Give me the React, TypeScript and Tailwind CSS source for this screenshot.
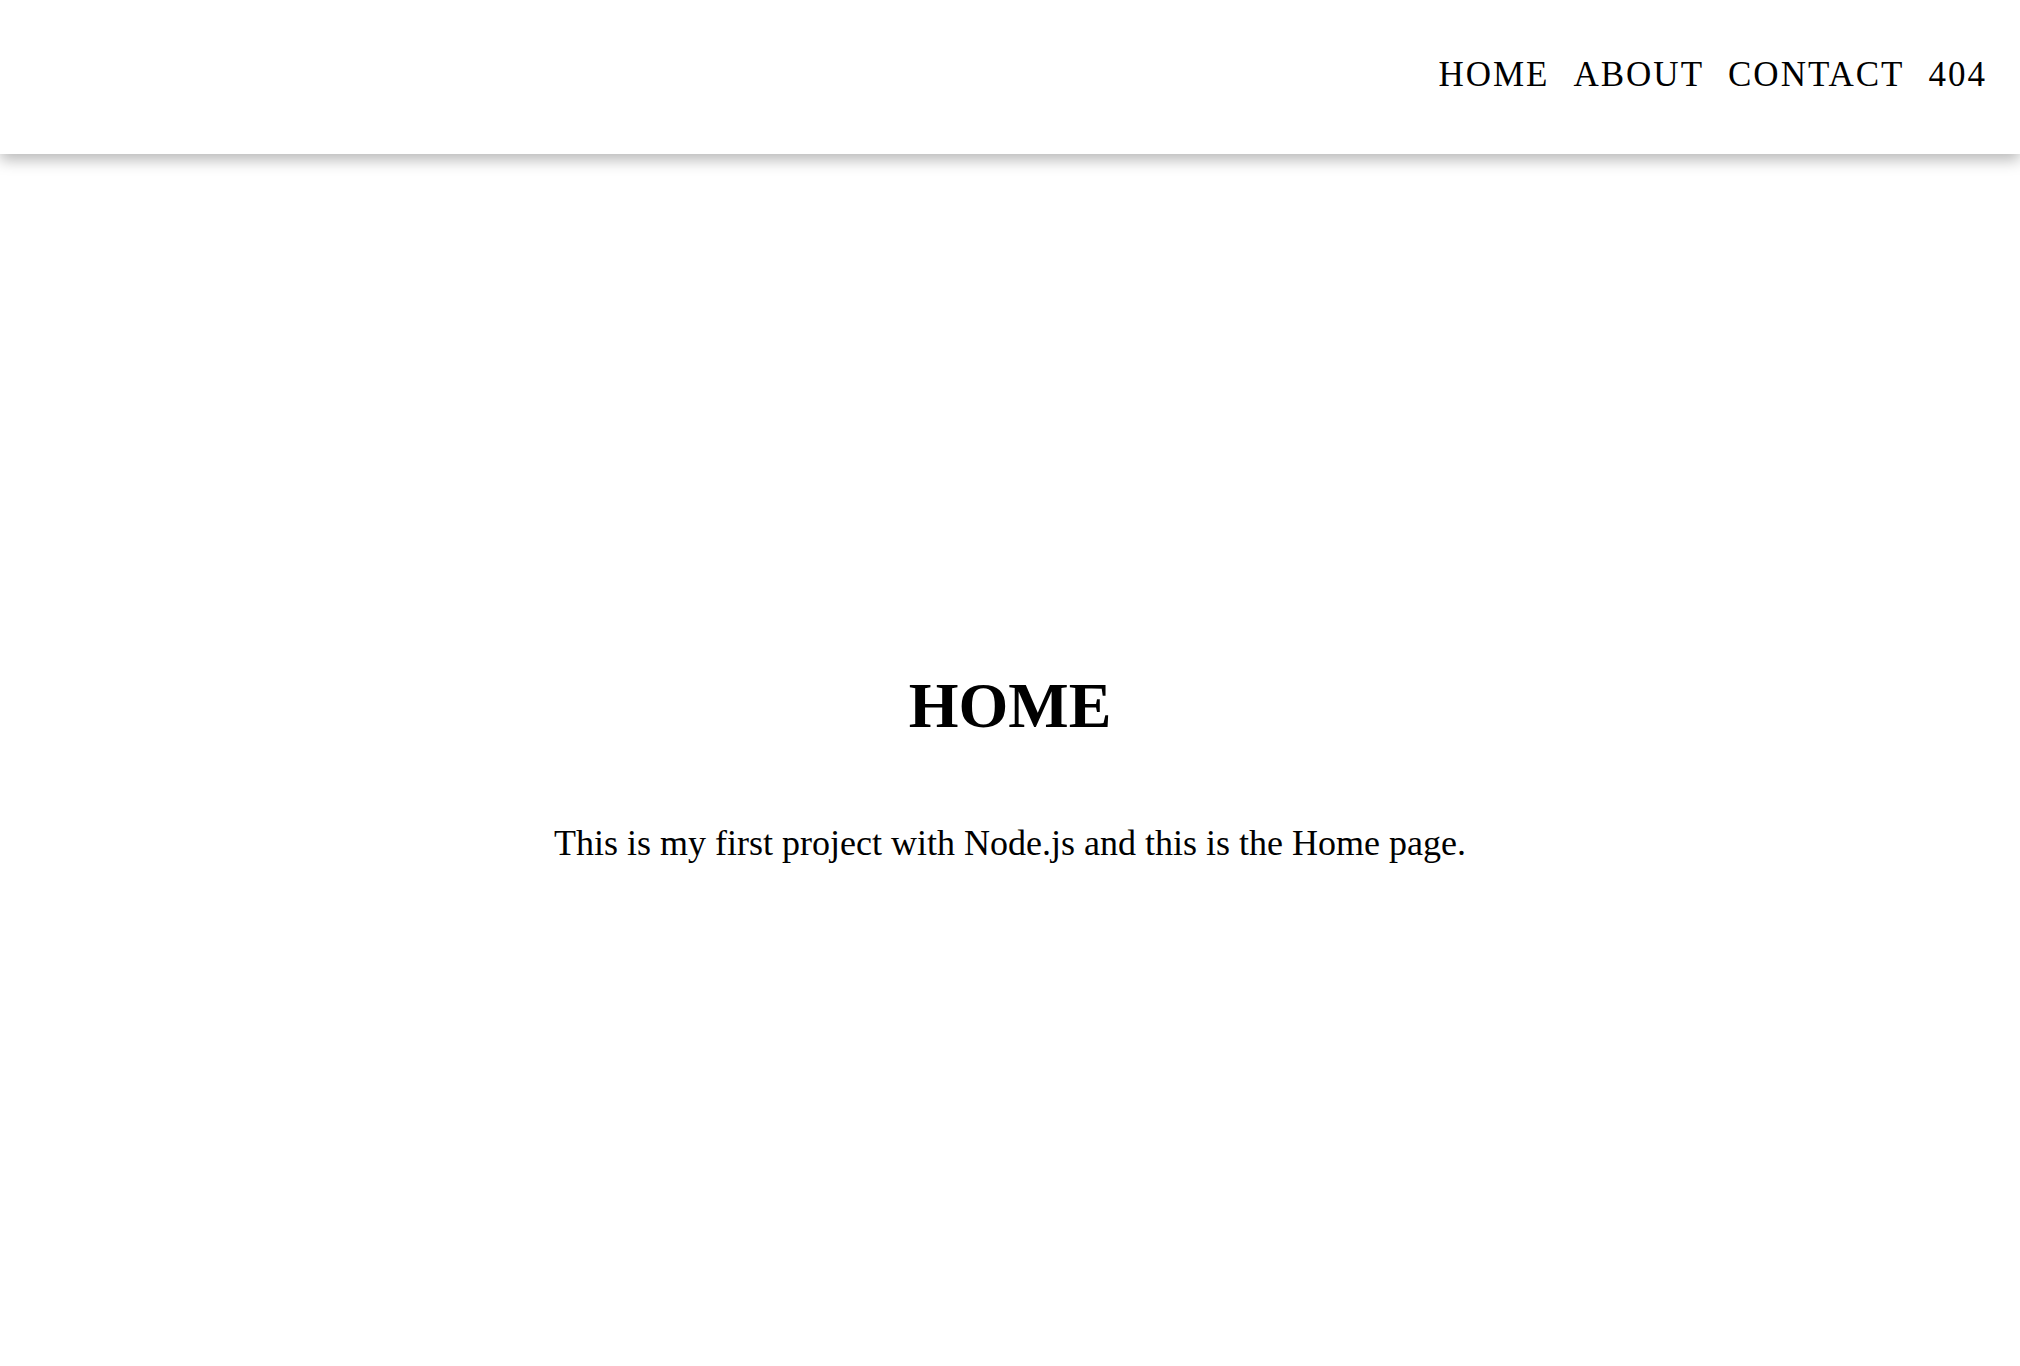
export default function App() {
  const links = ["HOME", "ABOUT", "CONTACT", "404"];
  return (
    <div className="min-h-screen bg-white text-black font-['Liberation_Serif','Times_New_Roman',serif]">
      {/* header */}
      <header className="h-[154px] bg-white flex items-center justify-end pr-[33px] pb-[6px] shadow-[0_6px_14px_rgba(0,0,0,0.28)] relative">
        <nav className="flex gap-[24px]">
          {links.map((l) => (
            <a key={l} href="#" className="text-[35px] tracking-[2px] leading-none">
              {l}
            </a>
          ))}
        </nav>
      </header>

      {/* main */}
      <main className="flex flex-col items-center pt-[515px]">
        <h1 className="text-[64px] font-bold leading-[74px]">HOME</h1>
        <p className="mt-[80px] text-[36px] leading-[41px]">
          This is my first project with Node.js and this is the Home page.
        </p>
      </main>
    </div>
  );
}
